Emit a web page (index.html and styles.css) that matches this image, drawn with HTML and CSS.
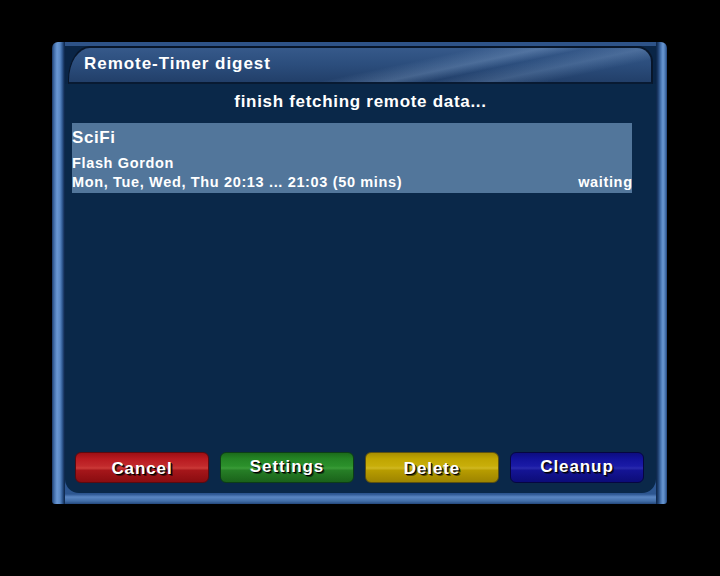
FILE: index.html
```html
<!DOCTYPE html>
<html>
<head>
<meta charset="utf-8">
<link rel="stylesheet" href="styles.css">
</head>
<body>
<div class="frame">
  <div class="side side-left"></div>
  <div class="main">
    <div class="tabrow">
      <div class="tab"><span class="tab-title">Remote-Timer digest</span></div>
    </div>
    <div class="content">
      <div class="status">finish fetching remote data...</div>
      <div class="list">
        <div class="entry selected">
          <div class="entry-channel">SciFi</div>
          <div class="entry-name">Flash Gordon</div>
          <div class="entry-line">
            <span>Mon, Tue, Wed, Thu 20:13 ... 21:03 (50 mins)</span>
            <span>waiting</span>
          </div>
        </div>
      </div>
      <div class="buttons">
        <div class="btn btn-red">Cancel</div>
        <div class="btn btn-green high">Settings</div>
        <div class="btn btn-yellow">Delete</div>
        <div class="btn btn-blue high">Cleanup</div>
      </div>
    </div>
  </div>
  <div class="side side-right"></div>
</div>
</body>
</html>
```

FILE: styles.css
```css
html, body {
  margin: 0;
  padding: 0;
  background: #000;
}
body {
  width: 720px;
  height: 576px;
  overflow: hidden;
  font-family: "Liberation Sans", Arial, sans-serif;
  font-weight: bold;
  color: #fff;
}
.frame {
  margin: 42px 0 0 52px;
  width: 615px;
  height: 462px;
  display: flex;
  border-radius: 6px 6px 3px 3px;
  overflow: hidden;
}
.side {
  width: 13px;
  flex: none;
}
.side-left {
  background: linear-gradient(to right, #1c3a66 0px, #3f6aa6 2px, #6a98d4 5px, #5a88c4 8px, #35609a 10px, #15325c 12px, #0c2446 13px);
}
.side-right {
  width: 12px;
  background: linear-gradient(to right, #0c2446 0px, #1c3c6a 2px, #4a78b6 5px, #6a98d2 7px, #4c7ab6 9px, #24457a 11px, #15305a 12px);
}
.main {
  flex: 1;
  display: flex;
  flex-direction: column;
  background: linear-gradient(to bottom, #1a3a68 0, #1a3a68 420px, #2d5690 440px, #2d5690 451px, #2c5590 452px, #5a86c2 455px, #426ea8 459px, #24487c 462px);
}
.tabrow {
  height: 38px;
  border-top: 4px solid #2e5388;
  background: #0a2546;
  padding: 0 3px 0 3px;
  display: flex;
  flex: none;
}
.tab {
  flex: 1;
  border-top: 2px solid #08162a;
  border-left: 1px solid #08162a;
  border-right: 2px solid #08162a;
  border-bottom: 2px solid #081a32;
  border-radius: 22px 16px 0 0 / 34px 16px 0 0;
  background:
    linear-gradient(168deg, rgba(255,255,255,0) 55%, rgba(170,200,235,0.25) 64%, rgba(255,255,255,0) 70%, rgba(170,200,235,0.2) 78%, rgba(255,255,255,0) 86%),
    linear-gradient(to bottom, #36598a 0%, #2b4d7c 50%, #223f69 100%);
  display: flex;
  align-items: center;
  padding-left: 15px;
}
.tab-title {
  font-size: 17px;
  line-height: 20px;
  margin-top: -2px;
  letter-spacing: 0.95px;
}
.content {
  height: 409px;
  background: #0a2849;
  border-radius: 0 0 14px 14px;
  display: flex;
  flex-direction: column;
}
.status {
  margin-top: 8px;
  font-size: 17px;
  line-height: 20px;
  text-align: center;
  letter-spacing: 0.7px;
}
.list {
  margin-top: 11px;
  padding: 0 23px 0 7px;
  flex: 1;
}
.entry {
  height: 70px;
  width: 560px;
  padding-top: 3px;
  box-sizing: border-box;
}
.entry.selected {
  background: #52769b;
}
.entry-channel {
  font-size: 17px;
  line-height: 24px;
  letter-spacing: 0.6px;
}
.entry-name {
  margin-top: 4px;
  font-size: 14.5px;
  line-height: 19px;
  letter-spacing: 0.65px;
}
.entry-line {
  display: flex;
  justify-content: space-between;
  font-size: 14.5px;
  line-height: 19px;
  letter-spacing: 0.65px;
}
.entry-line span:last-child {
  letter-spacing: 0.65px;
  margin-right: -0.65px;
}
.buttons {
  display: flex;
  gap: 11px;
  padding: 0 12px 10px 10px;
}
.btn {
  width: 134px;
  height: 31px;
  box-sizing: border-box;
  border-radius: 6px;
  font-size: 17px;
  line-height: 30px;
  padding-top: 1px;
  text-align: center;
  text-shadow: 1px 1px 0 #000, 2px 2px 0 rgba(0,0,0,0.5);
  letter-spacing: 0.9px;
}
.btn.high {
  line-height: 27px;
  padding-top: 0;
}
.btn-red {
  background: linear-gradient(to bottom, #9e0f14 0%, #b81a20 20%, #c22a2c 45%, #cc3a38 52%, #a5161a 60%, #8a0c10 100%);
  border: 1px solid #5a0a10;
}
.btn-green {
  background: linear-gradient(to bottom, #1b6b1b 0%, #248424 20%, #2b902b 45%, #3a9c38 52%, #267e26 60%, #1a621a 100%);
  border: 1px solid #0c3d18;
}
.btn-yellow {
  background: linear-gradient(to bottom, #a98f00 0%, #c0a500 20%, #c8ae0a 45%, #d0b820 52%, #b79c00 60%, #9d8400 100%);
  border: 1px solid #5c5010;
}
.btn-blue {
  background: linear-gradient(to bottom, #0d0d80 0%, #12129a 20%, #1a1aa6 45%, #2a2aae 52%, #141494 60%, #0c0c78 100%);
  border: 1px solid #060640;
}
```
